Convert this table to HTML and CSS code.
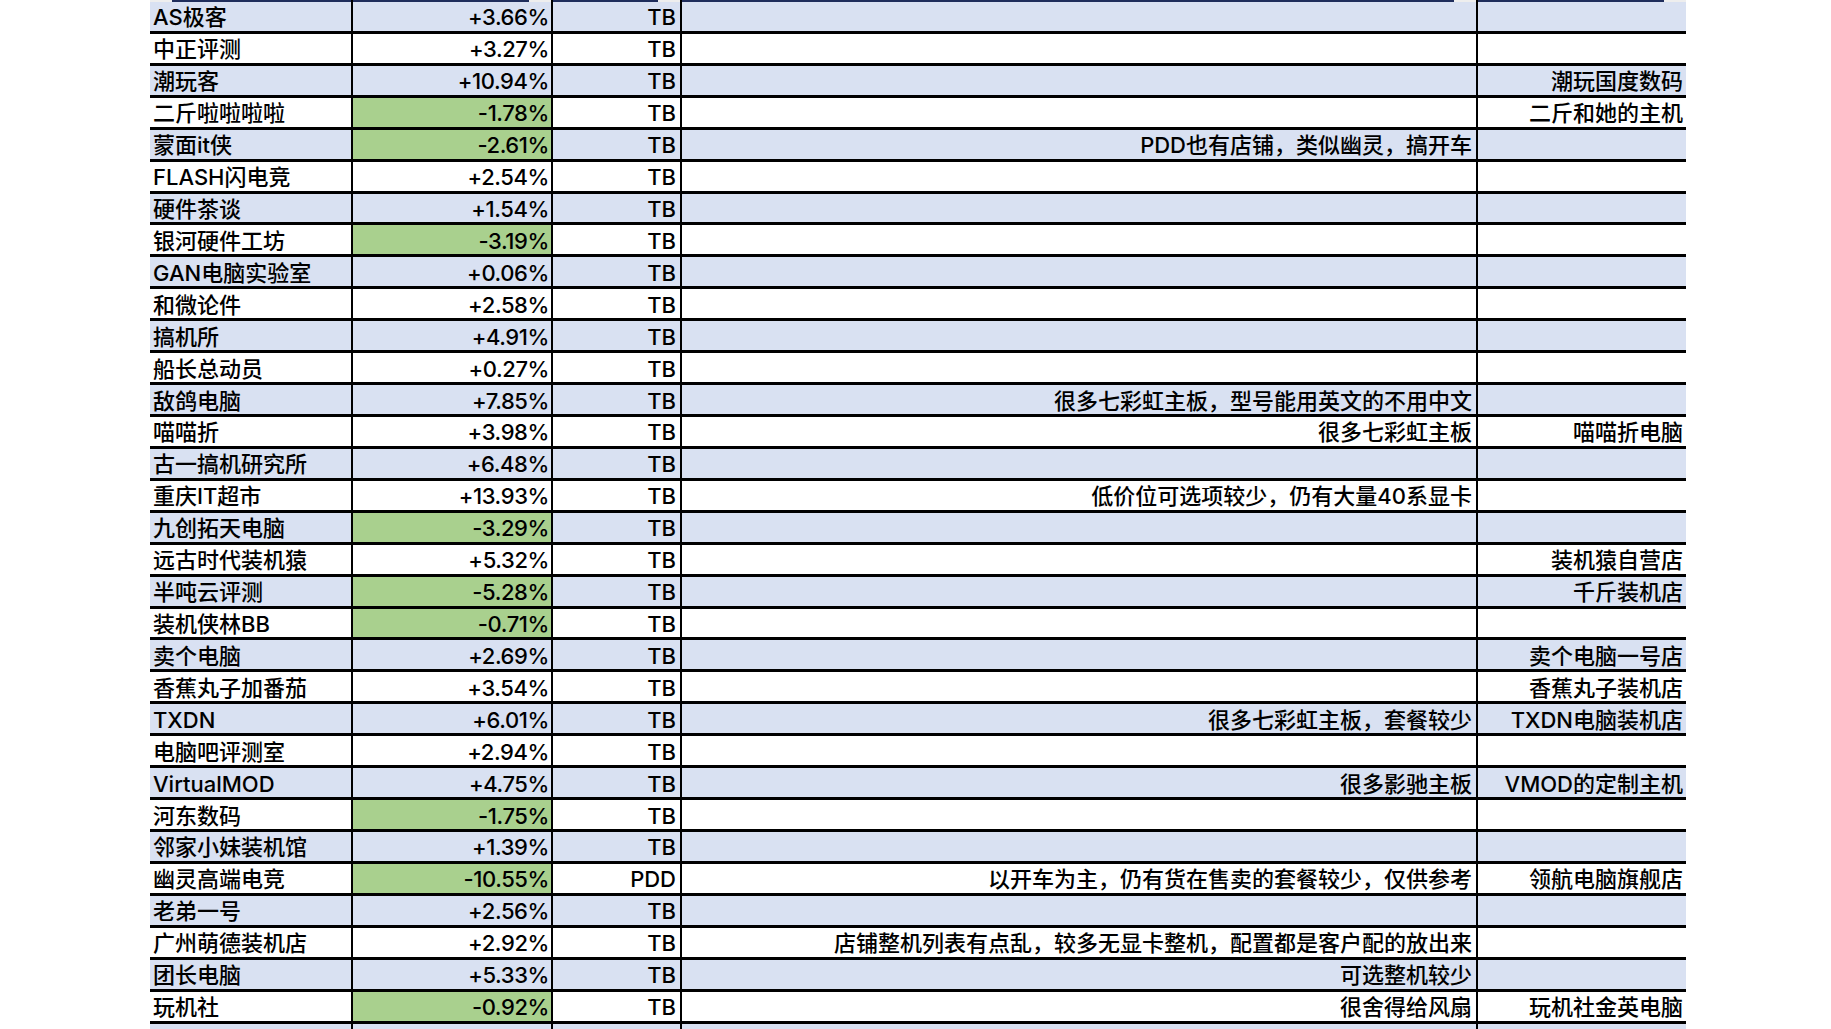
FILE: index.html
```html
<!DOCTYPE html>
<html lang="zh-CN">
<head>
<meta charset="utf-8">
<title>店铺列表</title>
<link rel="stylesheet" href="styles.css">
</head>
<body>
<div class="sheet">
  <div class="row head">
    <div class="cell c1"><span class="filter"></span></div>
    <div class="cell c2"><span class="filter"></span></div>
    <div class="cell c3"><span class="filter"></span></div>
    <div class="cell c4"><span class="filter"></span></div>
    <div class="cell c5"><span class="filter"></span></div>
  </div>
  <div class="row blue"><div class="cell c1">AS极客</div><div class="cell c2">+3.66%</div><div class="cell c3">TB</div><div class="cell c4"></div><div class="cell c5"></div></div>
  <div class="row"><div class="cell c1">中正评测</div><div class="cell c2">+3.27%</div><div class="cell c3">TB</div><div class="cell c4"></div><div class="cell c5"></div></div>
  <div class="row blue"><div class="cell c1">潮玩客</div><div class="cell c2">+10.94%</div><div class="cell c3">TB</div><div class="cell c4"></div><div class="cell c5">潮玩国度数码</div></div>
  <div class="row"><div class="cell c1">二斤啦啦啦啦</div><div class="cell c2 down">-1.78%</div><div class="cell c3">TB</div><div class="cell c4"></div><div class="cell c5">二斤和她的主机</div></div>
  <div class="row blue"><div class="cell c1">蒙面it侠</div><div class="cell c2 down">-2.61%</div><div class="cell c3">TB</div><div class="cell c4">PDD也有店铺，类似幽灵，搞开车</div><div class="cell c5"></div></div>
  <div class="row"><div class="cell c1">FLASH闪电竞</div><div class="cell c2">+2.54%</div><div class="cell c3">TB</div><div class="cell c4"></div><div class="cell c5"></div></div>
  <div class="row blue"><div class="cell c1">硬件茶谈</div><div class="cell c2">+1.54%</div><div class="cell c3">TB</div><div class="cell c4"></div><div class="cell c5"></div></div>
  <div class="row"><div class="cell c1">银河硬件工坊</div><div class="cell c2 down">-3.19%</div><div class="cell c3">TB</div><div class="cell c4"></div><div class="cell c5"></div></div>
  <div class="row blue"><div class="cell c1">GAN电脑实验室</div><div class="cell c2">+0.06%</div><div class="cell c3">TB</div><div class="cell c4"></div><div class="cell c5"></div></div>
  <div class="row"><div class="cell c1">和微论件</div><div class="cell c2">+2.58%</div><div class="cell c3">TB</div><div class="cell c4"></div><div class="cell c5"></div></div>
  <div class="row blue"><div class="cell c1">搞机所</div><div class="cell c2">+4.91%</div><div class="cell c3">TB</div><div class="cell c4"></div><div class="cell c5"></div></div>
  <div class="row"><div class="cell c1">船长总动员</div><div class="cell c2">+0.27%</div><div class="cell c3">TB</div><div class="cell c4"></div><div class="cell c5"></div></div>
  <div class="row blue"><div class="cell c1">敌鸽电脑</div><div class="cell c2">+7.85%</div><div class="cell c3">TB</div><div class="cell c4">很多七彩虹主板，型号能用英文的不用中文</div><div class="cell c5"></div></div>
  <div class="row"><div class="cell c1">喵喵折</div><div class="cell c2">+3.98%</div><div class="cell c3">TB</div><div class="cell c4">很多七彩虹主板</div><div class="cell c5">喵喵折电脑</div></div>
  <div class="row blue"><div class="cell c1">古一搞机研究所</div><div class="cell c2">+6.48%</div><div class="cell c3">TB</div><div class="cell c4"></div><div class="cell c5"></div></div>
  <div class="row"><div class="cell c1">重庆IT超市</div><div class="cell c2">+13.93%</div><div class="cell c3">TB</div><div class="cell c4">低价位可选项较少，仍有大量40系显卡</div><div class="cell c5"></div></div>
  <div class="row blue"><div class="cell c1">九创拓天电脑</div><div class="cell c2 down">-3.29%</div><div class="cell c3">TB</div><div class="cell c4"></div><div class="cell c5"></div></div>
  <div class="row"><div class="cell c1">远古时代装机猿</div><div class="cell c2">+5.32%</div><div class="cell c3">TB</div><div class="cell c4"></div><div class="cell c5">装机猿自营店</div></div>
  <div class="row blue"><div class="cell c1">半吨云评测</div><div class="cell c2 down">-5.28%</div><div class="cell c3">TB</div><div class="cell c4"></div><div class="cell c5">千斤装机店</div></div>
  <div class="row"><div class="cell c1">装机侠林BB</div><div class="cell c2 down">-0.71%</div><div class="cell c3">TB</div><div class="cell c4"></div><div class="cell c5"></div></div>
  <div class="row blue"><div class="cell c1">卖个电脑</div><div class="cell c2">+2.69%</div><div class="cell c3">TB</div><div class="cell c4"></div><div class="cell c5">卖个电脑一号店</div></div>
  <div class="row"><div class="cell c1">香蕉丸子加番茄</div><div class="cell c2">+3.54%</div><div class="cell c3">TB</div><div class="cell c4"></div><div class="cell c5">香蕉丸子装机店</div></div>
  <div class="row blue"><div class="cell c1">TXDN</div><div class="cell c2">+6.01%</div><div class="cell c3">TB</div><div class="cell c4">很多七彩虹主板，套餐较少</div><div class="cell c5">TXDN电脑装机店</div></div>
  <div class="row"><div class="cell c1">电脑吧评测室</div><div class="cell c2">+2.94%</div><div class="cell c3">TB</div><div class="cell c4"></div><div class="cell c5"></div></div>
  <div class="row blue"><div class="cell c1">VirtualMOD</div><div class="cell c2">+4.75%</div><div class="cell c3">TB</div><div class="cell c4">很多影驰主板</div><div class="cell c5">VMOD的定制主机</div></div>
  <div class="row"><div class="cell c1">河东数码</div><div class="cell c2 down">-1.75%</div><div class="cell c3">TB</div><div class="cell c4"></div><div class="cell c5"></div></div>
  <div class="row blue"><div class="cell c1">邻家小妹装机馆</div><div class="cell c2">+1.39%</div><div class="cell c3">TB</div><div class="cell c4"></div><div class="cell c5"></div></div>
  <div class="row"><div class="cell c1">幽灵高端电竞</div><div class="cell c2 down">-10.55%</div><div class="cell c3">PDD</div><div class="cell c4">以开车为主，仍有货在售卖的套餐较少，仅供参考</div><div class="cell c5">领航电脑旗舰店</div></div>
  <div class="row blue"><div class="cell c1">老弟一号</div><div class="cell c2">+2.56%</div><div class="cell c3">TB</div><div class="cell c4"></div><div class="cell c5"></div></div>
  <div class="row"><div class="cell c1">广州萌德装机店</div><div class="cell c2">+2.92%</div><div class="cell c3">TB</div><div class="cell c4">店铺整机列表有点乱，较多无显卡整机，配置都是客户配的放出来</div><div class="cell c5"></div></div>
  <div class="row blue"><div class="cell c1">团长电脑</div><div class="cell c2">+5.33%</div><div class="cell c3">TB</div><div class="cell c4">可选整机较少</div><div class="cell c5"></div></div>
  <div class="row"><div class="cell c1">玩机社</div><div class="cell c2 down">-0.92%</div><div class="cell c3">TB</div><div class="cell c4">很舍得给风扇</div><div class="cell c5">玩机社金英电脑</div></div>
  <div class="row blue"><div class="cell c1"></div><div class="cell c2"></div><div class="cell c3"></div><div class="cell c4"></div><div class="cell c5"></div></div>
</div>
</body>
</html>
```

FILE: styles.css
```css
html, body {
  margin: 0;
  padding: 0;
  background: #ffffff;
}
body {
  height: 1029px;
  overflow: hidden;
  font-family: Inter, "Noto Sans CJK SC", sans-serif;
  font-size: 22px;
  font-weight: 500;
  color: #000000;
}
.sheet {
  margin-left: 150px;
  width: 1536px;
  display: flex;
  flex-direction: column;
}
.row {
  display: grid;
  grid-template-columns: 203px 200px 129px 796px 208px;
  height: 31.93px;
  background: #ffffff;
}
.row.blue {
  background: #d9e1f2;
}
.cell {
  box-sizing: border-box;
  height: 31.93px;
  border-bottom: 3px solid #000000;
  display: flex;
  align-items: center;
  justify-content: flex-end;
  padding: 2px 4px 0 3px;
  line-height: 1;
  white-space: nowrap;
  overflow: hidden;
}
.c1, .c2, .c3, .c4 {
  border-right: 2px solid #000000;
}
.c1 {
  justify-content: flex-start;
}
.c2 {
  letter-spacing: -0.4px;
  padding-right: 2px;
}
.c5 {
  padding-right: 3px;
}
.c2.down {
  background: #a9d08e;
}
.row.head {
  height: 2px;
  background: #1f2d5c;
}
.row.head .cell {
  height: 2px;
  border-bottom: 0;
  padding: 0;
  align-items: stretch;
}
.filter {
  width: 22px;
  background: #eeeeee;
}
```
